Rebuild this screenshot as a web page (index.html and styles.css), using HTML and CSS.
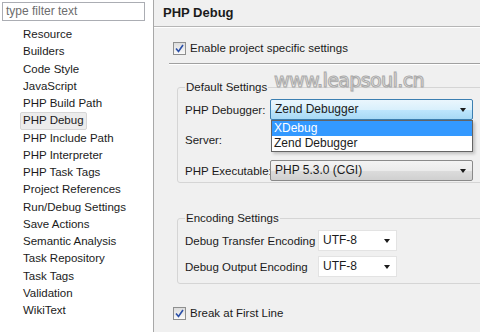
FILE: index.html
```html
<!DOCTYPE html>
<html lang="en">
<head>
    <meta charset="UTF-8">
    <title>Properties - PHP Debug</title>
    <link rel="stylesheet" href="styles.css">
</head>
<body>
    <div class="window">
        <aside class="nav">
            <div class="filter">type filter text</div>
            <ul class="tree">
                <li>Resource</li>
                <li>Builders</li>
                <li>Code Style</li>
                <li>JavaScript</li>
                <li>PHP Build Path</li>
                <li class="selected">PHP Debug</li>
                <li>PHP Include Path</li>
                <li>PHP Interpreter</li>
                <li>PHP Task Tags</li>
                <li>Project References</li>
                <li>Run/Debug Settings</li>
                <li>Save Actions</li>
                <li>Semantic Analysis</li>
                <li>Task Repository</li>
                <li>Task Tags</li>
                <li>Validation</li>
                <li>WikiText</li>
            </ul>
        </aside>

        <main class="page">
            <div class="page-title">PHP Debug</div>

            <div class="page-body">
                <div class="check">
                    <span class="box"><svg width="9" height="9" viewBox="0 0 9 9"><path d="M1 4.5 L3.5 7.5 L8 1" fill="none" stroke="#2a4fa8" stroke-width="1.6"/></svg></span>
                    Enable project specific settings
                </div>
                <div class="sep"></div>

                <fieldset class="group">
                    <legend>Default Settings</legend>
                    <div class="row">
                        <span class="label wide">PHP Debugger:</span>
                        <div class="combo open">
                            <div class="select active">Zend Debugger<span class="arrow"></span></div>
                            <ul class="dropdown">
                                <li class="hot">XDebug</li>
                                <li>Zend Debugger</li>
                            </ul>
                        </div>
                    </div>
                    <div class="row">
                        <span class="label wide">Server:</span>
                        <div class="combo"></div>
                    </div>
                    <div class="row">
                        <span class="label wide">PHP Executable:</span>
                        <div class="combo">
                            <div class="select">PHP 5.3.0 (CGI)<span class="arrow"></span></div>
                        </div>
                    </div>
                </fieldset>

                <fieldset class="group encoding">
                    <legend>Encoding Settings</legend>
                    <div class="row">
                        <span class="label long">Debug Transfer Encoding</span>
                        <div class="select plain">UTF-8<span class="arrow"></span></div>
                    </div>
                    <div class="row">
                        <span class="label long">Debug Output Encoding</span>
                        <div class="select plain">UTF-8<span class="arrow"></span></div>
                    </div>
                </fieldset>

                <div class="check bottom">
                    <span class="box"><svg width="9" height="9" viewBox="0 0 9 9"><path d="M1 4.5 L3.5 7.5 L8 1" fill="none" stroke="#2a4fa8" stroke-width="1.6"/></svg></span>
                    Break at First Line
                </div>
            </div>

            <div class="watermark">www.leapsoul.cn</div>
        </main>
    </div>
</body>
</html>
```

FILE: styles.css
```css
body {
    margin: 0;
    font-family: "Liberation Sans", Arial, sans-serif;
    font-size: 11.5px;
    color: #1b1b1b;
    background: #f0f0f0;
}

.window {
    display: flex;
    width: 480px;
    height: 332px;
    overflow: hidden;
}

/* left tree */
.nav {
    width: 154px;
    flex: none;
    background: #fff;
    border-right: 1px solid #a8a8a8;
    padding-top: 2px;
    box-sizing: border-box;
}

.filter {
    margin-left: 2px;
    width: 143px;
    height: 19px;
    box-sizing: border-box;
    border: 1px solid #abadb3;
    color: #6d6d6d;
    padding: 0 3px;
    line-height: 17px;
    font-size: 12px;
}

.tree {
    list-style: none;
    margin: 5px 0 0;
    padding: 0 0 0 20px;
}

.tree li {
    height: 17.25px;
    line-height: 17px;
    padding: 0 3px;
    display: table;
    box-sizing: border-box;
    white-space: nowrap;
}

.tree li.selected {
    background: #ececec;
    border: 1px solid #d6d6d6;
    border-radius: 2px;
    line-height: 15px;
    padding: 0 2px;
}

/* right page */
.page {
    position: relative;
    flex: 1;
    overflow: hidden;
}

.page-title {
    height: 26px;
    line-height: 26px;
    padding-left: 9px;
    font-weight: bold;
    font-size: 13px;
    border-bottom: 1px solid #b6b6b6;
    box-shadow: 0 1px 0 #fff;
}

.page-body {
    padding: 13px 0 0 15px;
}

.check {
    display: flex;
    align-items: center;
    gap: 4px;
    height: 16px;
    margin-left: 4px;
    white-space: nowrap;
}

.box {
    width: 13px;
    height: 13px;
    box-sizing: border-box;
    border: 1px solid #8e8f8f;
    background: linear-gradient(#dcdcdc, #fafafa);
    display: flex;
    align-items: center;
    justify-content: center;
}

.sep {
    height: 0;
    border-top: 1px solid #a0a0a0;
    border-bottom: 1px solid #fff;
    margin: 7px 0 0 0;
}

.group {
    margin: 15px -20px 0 8px;
    padding: 5px 0 1px 7px;
    border: 1px solid #d5d5d5;
    border-radius: 3px;
}

.group legend {
    padding: 0 1px;
    margin-left: 0;
    line-height: 14px;
}

.group.encoding {
    margin-top: 28px;
    padding-top: 5px;
    padding-bottom: 6px;
}

.row {
    display: flex;
    align-items: center;
    height: 21px;
    margin-bottom: 9.5px;
    white-space: nowrap;
}

.row:last-child {
    margin-bottom: 0;
}

.encoding .row {
    margin-bottom: 5px;
}

.encoding .row:last-child {
    margin-bottom: 0;
}

.label.wide {
    width: 85px;
    flex: none;
}

.label.long {
    width: 133px;
    flex: none;
}

.combo {
    position: relative;
    width: 203px;
    height: 21px;
}

.select {
    position: relative;
    height: 21px;
    box-sizing: border-box;
    border: 1px solid #8a8a8a;
    border-radius: 2px;
    background: linear-gradient(#f3f3f3 0%, #ebebeb 50%, #dcdcdc 51%, #d0d0d0 100%);
    padding: 0 4px;
    line-height: 19px;
    font-size: 12px;
}

.select.active {
    border-color: #3c7fb1;
    background: linear-gradient(#eaf6fd 0%, #d9f0fc 50%, #bee6fd 51%, #a7d9f5 100%);
}

.select.plain {
    width: 79px;
    border-color: #e3e3e3;
    background: #fff;
    border-radius: 0;
}

.arrow {
    position: absolute;
    right: 6px;
    top: 8px;
    border-left: 3.5px solid transparent;
    border-right: 3.5px solid transparent;
    border-top: 4px solid #1b1b1b;
}

.dropdown {
    position: absolute;
    top: 21px;
    left: 1px;
    right: 0;
    margin: 0;
    padding: 0;
    list-style: none;
    background: #fff;
    border: 1px solid #646464;
    box-shadow: 2px 2px 3px rgba(0, 0, 0, 0.2);
    z-index: 2;
    font-size: 12px;
}

.dropdown li {
    height: 15px;
    line-height: 15px;
    padding: 0 2px;
}

.dropdown li.hot {
    background: #3399ff;
    color: #fff;
}

.check.bottom {
    margin: 21px 0 0 4px;
}

.watermark {
    position: absolute;
    left: 120px;
    top: 69px;
    font-family: "DejaVu Sans", sans-serif;
    font-size: 19px;
    letter-spacing: -0.6px;
    color: #eeeeee;
    -webkit-text-stroke: 1px #a9a9a9;
    text-shadow: 1px 1px 1px #d0d0d0;
}
```
